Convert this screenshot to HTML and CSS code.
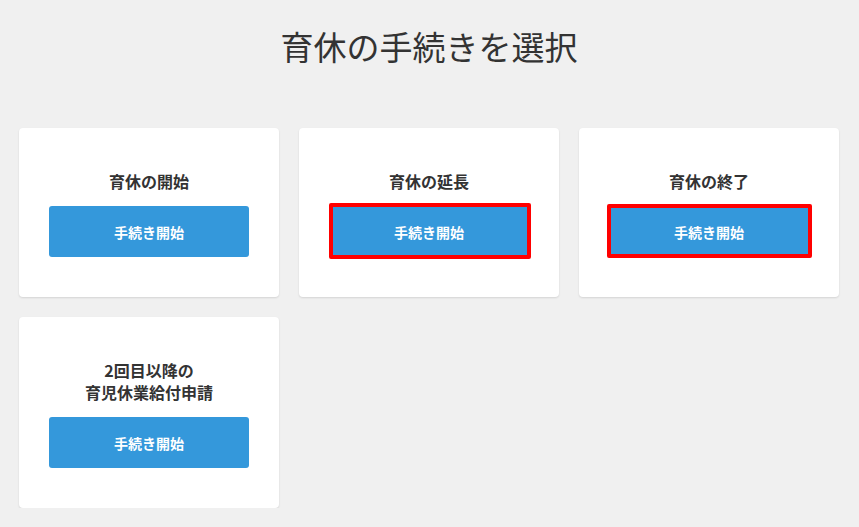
FILE: index.html
```html
<!DOCTYPE html>
<html lang="ja">
<head>
<meta charset="utf-8">
<title>育休の手続きを選択</title>
<link rel="stylesheet" href="styles.css">
</head>
<body>
<main class="page">
  <h1 class="page-title">育休の手続きを選択</h1>
  <div class="card-grid">
    <section class="card">
      <h2 class="card-title">育休の開始</h2>
      <div class="btn-wrap"><a class="btn" href="#">手続き開始</a></div>
    </section>
    <section class="card">
      <h2 class="card-title">育休の延長</h2>
      <div class="btn-wrap"><a class="btn" href="#">手続き開始</a><span class="mark mark-a"></span></div>
    </section>
    <section class="card">
      <h2 class="card-title">育休の終了</h2>
      <div class="btn-wrap"><a class="btn" href="#">手続き開始</a><span class="mark mark-b"></span></div>
    </section>
    <section class="card">
      <h2 class="card-title">2回目以降の<br>育児休業給付申請</h2>
      <div class="btn-wrap"><a class="btn" href="#">手続き開始</a></div>
    </section>
  </div>
</main>
</body>
</html>
```
FILE: styles.css
```css
html, body {
  margin: 0;
  padding: 0;
  background: #f0f0f0;
}
body {
  font-family: "Noto Sans CJK JP", "Noto Sans", sans-serif;
  color: #333;
}
.page {
  padding: 22px 20px 0 19px;
}
.page-title {
  margin: 0 0 58px;
  font-size: 33px;
  line-height: 48px;
  font-weight: 400;
  text-align: center;
  color: #333;
}
.card-grid {
  display: grid;
  grid-template-columns: repeat(3, 1fr);
  gap: 20px;
  align-items: start;
}
.card {
  background: #fff;
  border-radius: 4px;
  box-shadow: 0 1px 2px rgba(0, 0, 0, 0.12);
  padding: 42px 30px 40px;
  text-align: center;
}
.card-title {
  margin: 0 0 14px;
  font-size: 16px;
  line-height: 22px;
  font-weight: 700;
  color: #333;
}
.btn-wrap {
  position: relative;
}
.btn {
  display: flex;
  align-items: center;
  justify-content: center;
  height: 51px;
  background: #3498db;
  color: #fff;
  border-radius: 3px;
  font-size: 14px;
  font-weight: 700;
  text-decoration: none;
}
.mark {
  position: absolute;
  border: 4px solid #ff0000;
  border-radius: 2px;
  pointer-events: none;
}
.mark-a {
  left: 0;
  top: -3px;
  right: -2px;
  bottom: -2px;
}
.mark-b {
  left: -2px;
  top: -2px;
  right: -3px;
  bottom: -1px;
}
```
